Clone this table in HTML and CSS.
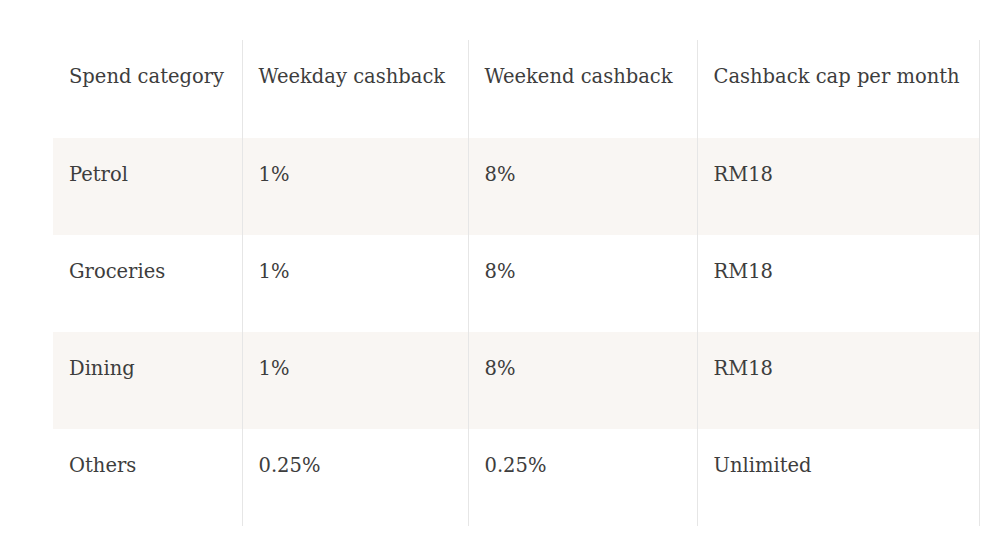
FILE: index.html
```html
<!DOCTYPE html>
<html>
<head>
<meta charset="utf-8">
<link rel="stylesheet" href="styles.css">
</head>
<body>
<table class="cb-table">
  <colgroup>
    <col class="c1"><col class="c2"><col class="c3"><col class="c4">
  </colgroup>
  <tr class="row head">
    <td>Spend category</td><td>Weekday cashback</td><td>Weekend cashback</td><td>Cashback cap per month</td>
  </tr>
  <tr class="row alt">
    <td>Petrol</td><td>1%</td><td>8%</td><td>RM18</td>
  </tr>
  <tr class="row">
    <td>Groceries</td><td>1%</td><td>8%</td><td>RM18</td>
  </tr>
  <tr class="row alt">
    <td>Dining</td><td>1%</td><td>8%</td><td>RM18</td>
  </tr>
  <tr class="row last">
    <td>Others</td><td>0.25%</td><td>0.25%</td><td>Unlimited</td>
  </tr>
</table>
</body>
</html>
```
FILE: styles.css
```css
html, body {
  margin: 0;
  padding: 0;
  background: #ffffff;
}
body {
  padding: 40px 0 0 53px;
  font-family: "DejaVu Serif", "Liberation Serif", serif;
  color: #3d3d3d;
}
.cb-table {
  border-collapse: collapse;
  table-layout: fixed;
  width: 926px;
}
.c1 { width: 189px; }
.c2 { width: 226px; }
.c3 { width: 229px; }
.c4 { width: 282px; }
.row td {
  height: 97px;
  padding: 23px 0 0 16px;
  box-sizing: border-box;
  vertical-align: top;
  font-size: 19.5px;
  line-height: 28px;
  border-right: 1px solid #e6e6e6;
  white-space: nowrap;
}
.row.head td { height: 98px; }
.row.alt td { background: #f9f6f3; }
```
